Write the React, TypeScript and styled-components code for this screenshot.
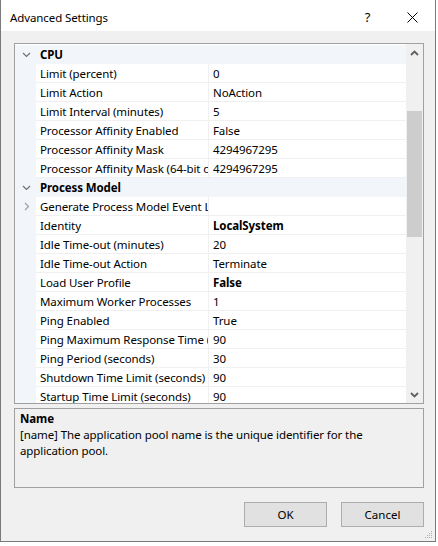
import styled, { createGlobalStyle } from "styled-components";

const GlobalStyle = createGlobalStyle`
  html, body {
    margin: 0;
    padding: 0;
    background: #ffffff;
  }
  body {
    font-family: "Noto Sans", "Open Sans", sans-serif;
    font-size: 11.5px;
    letter-spacing: -0.1px;
    color: #000000;
  }
`;

const Window = styled.div`
  width: 434px;
  height: 541px;
  background: #f0f0f0;
  border: 1px solid #7a7a7a;
  border-top: 0;
  display: flex;
  flex-direction: column;
  position: relative;
`;

const TitleBar = styled.div`
  height: 31px;
  box-sizing: border-box;
  padding: 3px 0 0 9px;
  background: #ffffff;
  display: flex;
  align-items: center;
`;

const Title = styled.div`
  flex: 1;
  color: #000000;
`;

const TitleButton = styled.div`
  width: 45px;
  height: 28px;
  display: flex;
  align-items: center;
  justify-content: center;
  font-size: 13px;
  color: #000000;
`;

const Body = styled.div`
  flex: 1;
  display: flex;
  flex-direction: column;
  padding: 12px 11px 0 13px;
`;

const Grid = styled.div`
  height: 359px;
  border: 1px solid #a0a0a0;
  background: #ffffff;
  display: flex;
  overflow: hidden;
`;

const List = styled.div`
  flex: 1;
  overflow: hidden;
  padding-top: 1px;
`;

const Row = styled.div<{ $header?: boolean }>`
  display: grid;
  grid-template-columns: 21px 173px 1fr;
  height: 19px;
  line-height: 20px;
  background: ${(p) => (p.$header ? "#f2f6fb" : "#ffffff")};
`;

const Gutter = styled.div`
  background: #f2f6fb;
  display: flex;
  align-items: center;
  justify-content: center;
  padding-left: 2px;
`;

const NameCell = styled.div<{ $header?: boolean }>`
  padding-left: 4px;
  white-space: nowrap;
  overflow: hidden;
  font-weight: ${(p) => (p.$header ? 700 : 400)};
  border-bottom: 1px solid ${(p) => (p.$header ? "transparent" : "#f0f0f0")};
  border-right: 1px solid ${(p) => (p.$header ? "transparent" : "#f0f0f0")};
  ${(p) => (p.$header ? "grid-column: 2 / 4;" : "")}
`;

const ValueCell = styled.div<{ $bold?: boolean }>`
  padding-left: 4px;
  white-space: nowrap;
  overflow: hidden;
  font-weight: ${(p) => (p.$bold ? 700 : 400)};
  border-bottom: 1px solid #f0f0f0;
`;

const ScrollBar = styled.div`
  width: 17px;
  background: #f0f0f0;
  display: flex;
  flex-direction: column;
`;

const ScrollArrow = styled.div`
  height: 17px;
  display: flex;
  align-items: center;
  justify-content: center;
`;

const ScrollTrack = styled.div`
  flex: 1;
  padding: 0 1px;
`;

const Thumb = styled.div`
  margin-top: 50px;
  height: 126px;
  background: #cdcdcd;
`;

const Description = styled.div`
  margin-top: 4px;
  height: 80px;
  border: 1px solid #a0a0a0;
  background: #f0f0f0;
  padding: 2px 5px 0;
  line-height: 16px;
  box-sizing: border-box;
`;

const DescTitle = styled.div`
  font-weight: 700;
`;

const Footer = styled.div`
  display: flex;
  justify-content: flex-end;
  gap: 14px;
  padding: 14px 0 0 0;
`;

const Button = styled.button`
  width: 83px;
  height: 25px;
  background: #e1e1e1;
  border: 1px solid #adadad;
  font-family: "Noto Sans", "Open Sans", sans-serif;
  font-size: 11.5px;
  color: #000000;
  padding: 0;
`;

const Grip = styled.svg`
  position: absolute;
  right: 2px;
  bottom: 2px;
`;

type Prop = { name: string; value?: string; bold?: boolean; expandable?: boolean };
type Section = { title: string; props: Prop[] };

const sections: Section[] = [
  {
    title: "CPU",
    props: [
      { name: "Limit (percent)", value: "0" },
      { name: "Limit Action", value: "NoAction" },
      { name: "Limit Interval (minutes)", value: "5" },
      { name: "Processor Affinity Enabled", value: "False" },
      { name: "Processor Affinity Mask", value: "4294967295" },
      { name: "Processor Affinity Mask (64-bit option)", value: "4294967295" },
    ],
  },
  {
    title: "Process Model",
    props: [
      { name: "Generate Process Model Event Log Entry", value: "", expandable: true },
      { name: "Identity", value: "LocalSystem", bold: true },
      { name: "Idle Time-out (minutes)", value: "20" },
      { name: "Idle Time-out Action", value: "Terminate" },
      { name: "Load User Profile", value: "False", bold: true },
      { name: "Maximum Worker Processes", value: "1" },
      { name: "Ping Enabled", value: "True" },
      { name: "Ping Maximum Response Time (seconds)", value: "90" },
      { name: "Ping Period (seconds)", value: "30" },
      { name: "Shutdown Time Limit (seconds)", value: "90" },
      { name: "Startup Time Limit (seconds)", value: "90" },
    ],
  },
];

const ChevronDown = () => (
  <svg width="9" height="6" viewBox="0 0 9 6">
    <path d="M1 1 L4.5 4.5 L8 1" fill="none" stroke="#707070" strokeWidth="1.2" />
  </svg>
);

const ChevronRight = () => (
  <svg width="6" height="9" viewBox="0 0 6 9">
    <path d="M1 1 L4.5 4.5 L1 8" fill="none" stroke="#a0a0a0" strokeWidth="1.2" />
  </svg>
);

const ArrowUp = () => (
  <svg width="9" height="6" viewBox="0 0 9 6">
    <path d="M1 5 L4.5 1.5 L8 5" fill="none" stroke="#606060" strokeWidth="1.8" />
  </svg>
);

const ArrowDown = () => (
  <svg width="9" height="6" viewBox="0 0 9 6">
    <path d="M1 1 L4.5 4.5 L8 1" fill="none" stroke="#606060" strokeWidth="1.8" />
  </svg>
);

const App = () => {
  return (
    <>
      <GlobalStyle />
      <Window>
        <TitleBar>
          <Title>Advanced Settings</Title>
          <TitleButton>?</TitleButton>
          <TitleButton>
            <svg width="11" height="11" viewBox="0 0 11 11">
              <path d="M0.5 0.5 L10.5 10.5 M10.5 0.5 L0.5 10.5" stroke="#000" strokeWidth="1" />
            </svg>
          </TitleButton>
        </TitleBar>
        <Body>
          <Grid>
            <List>
              {sections.map((s) => (
                <div key={s.title}>
                  <Row $header>
                    <Gutter>
                      <ChevronDown />
                    </Gutter>
                    <NameCell $header>{s.title}</NameCell>
                  </Row>
                  {s.props.map((p) => (
                    <Row key={p.name}>
                      <Gutter>{p.expandable && <ChevronRight />}</Gutter>
                      <NameCell>{p.name}</NameCell>
                      <ValueCell $bold={p.bold}>{p.value}</ValueCell>
                    </Row>
                  ))}
                </div>
              ))}
            </List>
            <ScrollBar>
              <ScrollArrow>
                <ArrowUp />
              </ScrollArrow>
              <ScrollTrack>
                <Thumb />
              </ScrollTrack>
              <ScrollArrow>
                <ArrowDown />
              </ScrollArrow>
            </ScrollBar>
          </Grid>
          <Description>
            <DescTitle>Name</DescTitle>
            <div>
              [name] The application pool name is the unique identifier for the
              <br />
              application pool.
            </div>
          </Description>
          <Footer>
            <Button>OK</Button>
            <Button>Cancel</Button>
          </Footer>
        </Body>
        <Grip width="10" height="10" viewBox="0 0 10 10">
          <g fill="#b0b0b0">
            <rect x="8" y="2" width="1" height="1" />
            <rect x="6" y="4" width="1" height="1" />
            <rect x="8" y="4" width="1" height="1" />
            <rect x="4" y="6" width="1" height="1" />
            <rect x="6" y="6" width="1" height="1" />
            <rect x="8" y="6" width="1" height="1" />
            <rect x="2" y="8" width="1" height="1" />
            <rect x="4" y="8" width="1" height="1" />
            <rect x="6" y="8" width="1" height="1" />
            <rect x="8" y="8" width="1" height="1" />
          </g>
        </Grip>
      </Window>
    </>
  );
};

export default App;
